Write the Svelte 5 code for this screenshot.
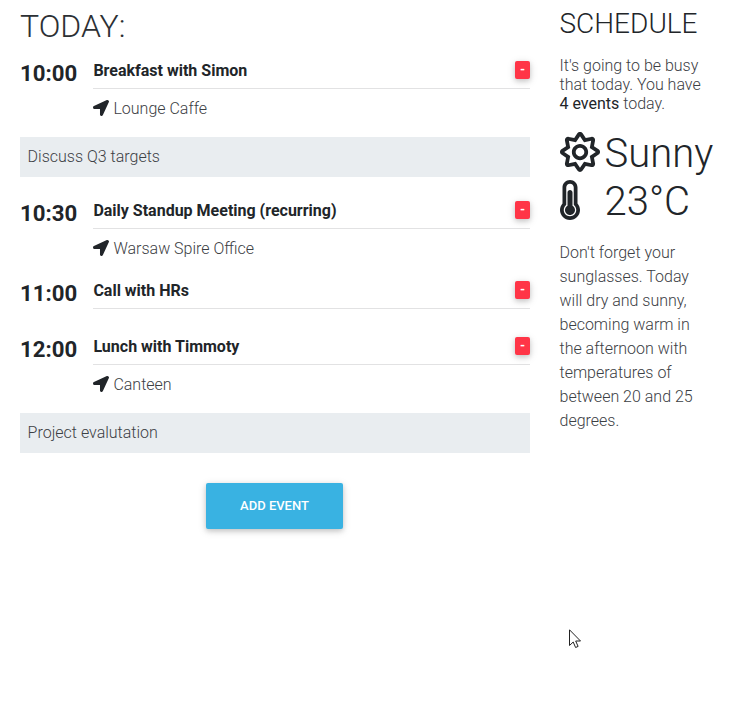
<script>
  const events = [
    { time: '10:00', title: 'Breakfast with Simon', place: 'Lounge Caffe', note: 'Discuss Q3 targets' },
    { time: '10:30', title: 'Daily Standup Meeting (recurring)', place: 'Warsaw Spire Office' },
    { time: '11:00', title: 'Call with HRs' },
    { time: '12:00', title: 'Lunch with Timmoty', place: 'Canteen', note: 'Project evalutation' }
  ];
</script>

<div class="page">
  <main>
    <h2>TODAY:</h2>
    {#each events as e}
      <section class="event">
        <div class="row">
          <h3 class="time">{e.time}</h3>
          <div class="body">
            <div class="head">
              <h6>{e.title}</h6>
              <button class="remove">-</button>
            </div>
            {#if e.place}
              <div class="place">
                <svg width="16" height="16" viewBox="0 0 512 512"><path d="M444.52 3.52L28.74 195.42c-47.97 22.39-31.98 92.75 19.19 92.75h175.91v175.91c0 51.17 70.36 67.17 92.75 19.19l191.9-415.78c15.99-38.39-25.59-79.97-63.97-63.97z" /></svg>
                <span>{e.place}</span>
              </div>
            {:else}
              <div class="blank"></div>
            {/if}
          </div>
        </div>
        {#if e.note}<p class="note">{e.note}</p>{/if}
      </section>
    {/each}
    <button class="add">ADD EVENT</button>
  </main>

  <aside>
    <h3 class="heading">SCHEDULE</h3>
    <p class="busy">It's going to be busy that today. You have <b>4 events</b> today.</p>
    <div class="weather">
      <svg width="40" height="40" viewBox="0 0 512 512"><path d="M494.2 221.9l-59.8-40.5 13.7-71c2.6-13.2-1.6-26.8-11.1-36.4-9.6-9.5-23.2-13.7-36.2-11.1l-70.9 13.7-40.4-59.9c-15.1-22.3-51.9-22.3-67 0l-40.4 59.9-70.8-13.7C98 60.4 84.5 64.5 75 74.1c-9.5 9.6-13.7 23.1-11.1 36.3l13.7 71-59.8 40.5C6.6 229.5 0 242 0 255.5s6.7 26 17.8 33.5l59.8 40.5-13.7 71c-2.6 13.2 1.6 26.8 11.1 36.3 9.5 9.5 22.9 13.7 36.3 11.1l70.8-13.7 40.4 59.9C230 505.3 242.6 512 256 512s26-6.7 33.5-17.8l40.4-59.9 70.9 13.7c13.4 2.7 26.8-1.6 36.3-11.1 9.5-9.5 13.6-23.1 11.1-36.3l-13.7-71 59.8-40.5c11.1-7.5 17.8-20.1 17.8-33.5-.1-13.6-6.7-26.1-17.9-33.7zm-112.9 85.6l17.6 91.2-91-17.6L256 458l-51.9-77-90.9 17.6 17.6-91.2-76.8-52 76.8-52-17.6-91.2 91 17.6L256 53l51.9 76.9 91-17.6-17.6 91.1 76.8 52-76.8 52.1zM256 152c-57.3 0-104 46.7-104 104s46.7 104 104 104 104-46.7 104-104-46.7-104-104-104zm0 160c-30.9 0-56-25.1-56-56s25.1-56 56-56 56 25.1 56 56-25.1 56-56 56z" /></svg>
      <span class="sky">Sunny</span>
      <svg width="20" height="40" viewBox="0 0 256 512"><path d="M192 384c0 35.346-28.654 64-64 64-35.346 0-64-28.654-64-64 0-23.685 12.876-44.349 32-55.417V160c0-17.673 14.327-32 32-32s32 14.327 32 32v168.583c19.124 11.068 32 31.732 32 55.417zm32-84.653c19.912 22.563 32 52.194 32 84.653 0 70.696-57.303 128-128 128-.299 0-.609-.001-.909-.003C56.789 511.509-.357 453.636.002 383.333.166 351.135 12.225 321.755 32 299.347V96c0-53.019 42.981-96 96-96s96 42.981 96 96v203.347zM208 384c0-34.339-19.37-52.19-32-66.502V96c0-26.467-21.533-48-48-48S80 69.533 80 96v221.498c-12.732 14.428-31.825 32.1-31.999 66.08-.224 43.876 35.563 80.116 79.423 80.42L128 464c44.112 0 80-35.888 80-80z" /></svg>
      <span>23°C</span>
    </div>
    <p class="forecast">Don't forget your sunglasses. Today will dry and sunny, becoming warm in the afternoon with temperatures of between 20 and 25 degrees.</p>
  </aside>

  <svg class="cursor" width="12" height="20" viewBox="0 0 12 20"><path d="M.5 .8V16.5L4.2 13l2.4 5.5 2.5-1.1L6.7 12h4.8z" /></svg>
</div>

<style>
  :global(body) { margin: 0; background: #fff; }
  .page {
    position: relative;
    box-sizing: border-box;
    display: flex;
    gap: 29.5px;
    height: 704px;
    padding: 7px 20px 0;
    overflow: hidden;
    font: 300 16px/24px Roboto, sans-serif;
    color: #212529;
  }
  h2, h3, h6, p { margin: 0; font-weight: 300; }
  svg { display: block; fill: #212529; }
  main { width: 510px; flex: none; }
  h2 { font-size: 32px; font-weight: 300; line-height: 38px; height: 52px; color: #2c3034; }
  .row { display: flex; }
  .time { width: 73px; flex: none; font-size: 22.2px; font-weight: 700; line-height: 29px; }
  .body { flex: 1; }
  .head {
    display: flex;
    align-items: flex-start;
    justify-content: space-between;
    height: 29px;
    border-bottom: 1px solid #e2e2e3;
  }
  h6 { padding-left: .4px; font-size: 16px; font-weight: 700; line-height: 24px; }
  button { border: 0; padding: 0; color: #fff; font-family: Roboto, sans-serif; font-weight: 500; }
  .remove {
    width: 15px;
    height: 18px;
    margin-top: 2px;
    border-radius: 2px;
    background: #ff3547;
    font-size: 13px;
    line-height: 18px;
    font-weight: 700;
    box-shadow: 0 2px 5px rgba(0, 0, 0, .16), 0 2px 10px rgba(0, 0, 0, .12);
  }
  .place { display: flex; align-items: center; gap: 4.4px; height: 24px; padding: 7px 0 19px; }
  .place span { padding-top: 2px; }
  .place span, .note, .busy, .forecast { color: #3c4044; }
  .blank { height: 26px; }
  .note { height: 40px; margin: -2px 0 22px; padding-left: 7.6px; box-sizing: border-box; line-height: 39px; background: #e9edf0; }
  .add {
    display: block;
    width: 137px;
    height: 46px;
    margin: 30px 0 0 186px;
    padding: 0 0 2px;
    border-radius: 2px;
    background: #39b2e2;
    font-size: 13px;
    font-weight: 500;
    box-shadow: 0 2px 5px rgba(0, 0, 0, .16), 0 2px 10px rgba(0, 0, 0, .12);
  }
  aside { width: 153px; }
  .heading { font-size: 28px; line-height: 34px; }
  .busy { width: 150px; margin-top: 15px; line-height: 19.2px; }
  b { font-weight: 400; color: #212529; }
  .weather {
    display: grid;
    grid-template-columns: 45px max-content;
    grid-auto-rows: 48px;
    margin-top: 15px;
    font-size: 40px;
    line-height: 50px;
  }
  .weather svg { margin-top: 3px; }
  .forecast { width: 145px; margin-top: 16px; }
  .cursor { position: absolute; left: 569px; top: 629px; }
  .cursor path { fill: #fff; stroke: #222; stroke-width: 1; }
</style>
